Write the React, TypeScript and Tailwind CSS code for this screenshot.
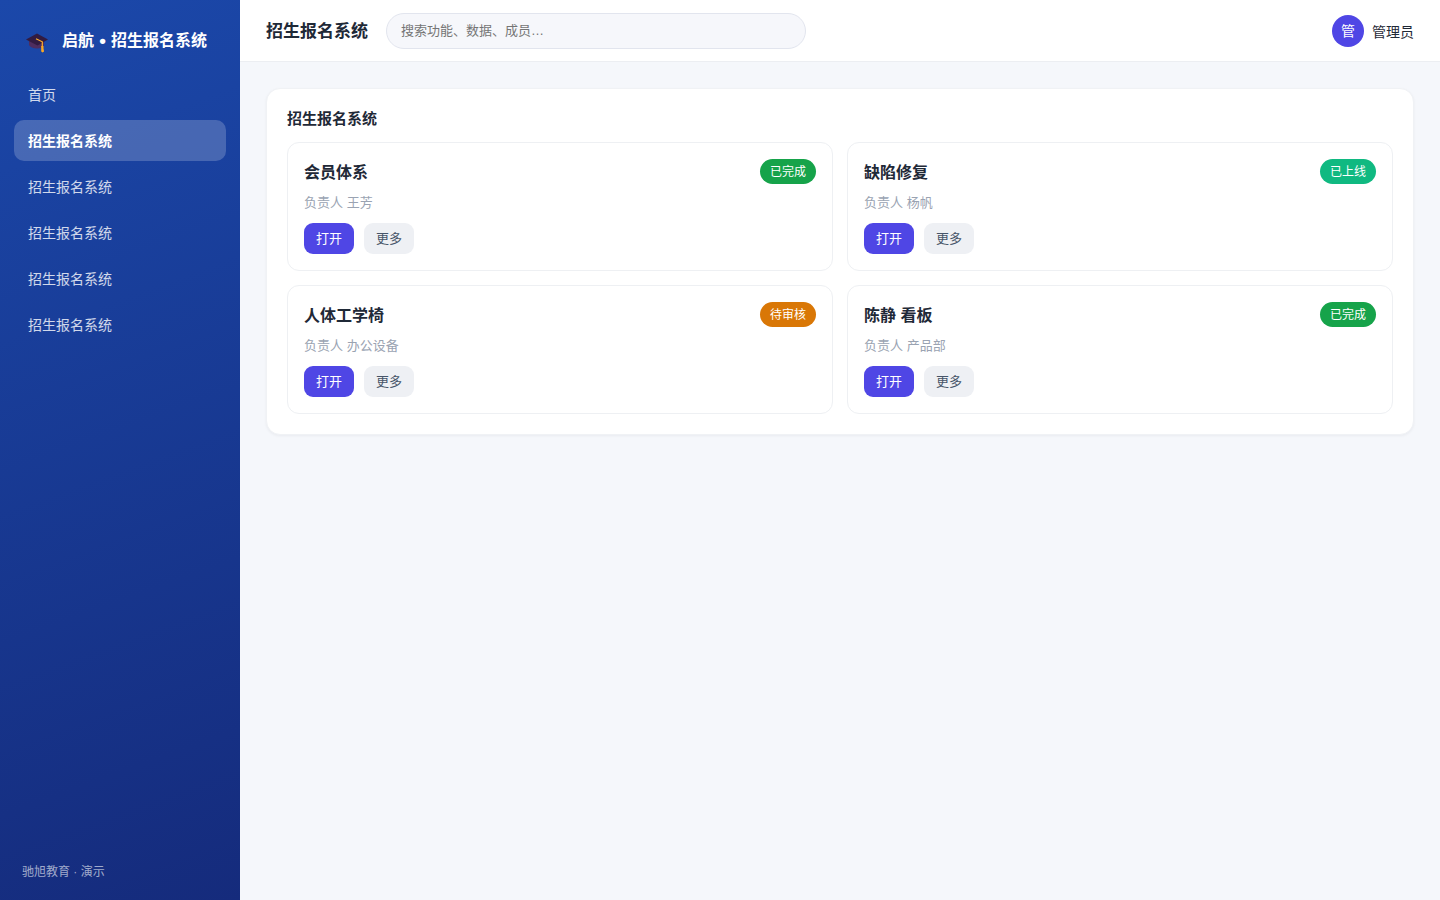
import React from 'react';

type Status = 'done' | 'online' | 'pending';

interface CardItem {
  title: string;
  owner: string;
  status: Status;
}

const navItems = ['首页', '招生报名系统', '招生报名系统', '招生报名系统', '招生报名系统', '招生报名系统'];
const activeIndex = 1;

const cards: CardItem[] = [
  { title: '会员体系', owner: '王芳', status: 'done' },
  { title: '缺陷修复', owner: '杨帆', status: 'online' },
  { title: '人体工学椅', owner: '办公设备', status: 'pending' },
  { title: '陈静 看板', owner: '产品部', status: 'done' },
];

const statusMap: Record<Status, { label: string; className: string }> = {
  done: { label: '已完成', className: 'bg-[#16a34a]' },
  online: { label: '已上线', className: 'bg-[#10b981]' },
  pending: { label: '待审核', className: 'bg-[#d97706]' },
};

const CapIcon: React.FC = () => (
  <svg width="24" height="22" viewBox="0 0 24 22" className="mt-1.5 shrink-0">
    <path d="M4 9v4c1 2 4 3.500 8 3.500S18.500 15 19 13V9z" fill="#4e2d5e" />
    <path d="M12 1.500 23 7.500 12.500 13.500 1 7.500z" fill="#321b41" />
    <path d="M11 6.800 17.300 9.800V15" fill="none" stroke="#ffb02e" strokeWidth="1.200" />
    <path d="M16.200 14h2.300v2.500l.6 3-1.600 1-1.300-1z" fill="#f9a825" />
  </svg>
);

const Sidebar: React.FC = () => (
  <aside className="flex w-60 shrink-0 flex-col bg-[linear-gradient(160deg,#1b48aa_0%,#152b7c_100%)] px-3.5 text-white">
    <div className="flex h-[76px] items-center gap-3 pt-1 pl-[11px]">
      <CapIcon />
      <span className="flex items-center pt-0.5 pl-px text-base leading-6 font-bold whitespace-nowrap">
        启航<span className="w-[17px] text-center text-[19px]">•</span>招生报名系统
      </span>
    </div>

    <nav className="-mt-0.5 flex flex-col gap-[5px]">
      {navItems.map((item, index) => (
        <a
          key={index}
          className={
            index === activeIndex
              ? 'flex h-[41px] items-center rounded-[10px] bg-white/20 px-3.5 text-sm font-bold'
              : 'flex h-[41px] items-center rounded-[10px] px-3.5 text-sm text-white/80'
          }
        >
          {item}
        </a>
      ))}
    </nav>

    <div className="mt-auto pb-[19px] pl-2 text-xs leading-[18px] text-white/60">驰旭教育 · 演示</div>
  </aside>
);

const Header: React.FC = () => (
  <header className="flex h-[62px] shrink-0 items-center border-b border-[#eceef2] bg-white pr-[26px] pl-[26px]">
    <h1 className="w-[120px] pt-0.5 text-[17px] font-bold whitespace-nowrap">招生报名系统</h1>
    <input
      type="text"
      placeholder="搜索功能、数据、成员…"
      className="h-9 w-[420px] rounded-full border border-[#e2e5ee] bg-[#f6f7fb] px-3.5 text-[13px] outline-none placeholder:text-[#757575]"
    />
    <div className="ml-auto flex items-center gap-2">
      <div className="flex size-8 items-center justify-center rounded-full bg-[#4f46e5] text-sm text-white">管</div>
      <span className="pt-0.5 text-sm">管理员</span>
    </div>
  </header>
);

const Card: React.FC<{ item: CardItem }> = ({ item }) => {
  const status = statusMap[item.status];

  return (
    <div className="h-[129px] rounded-xl border border-[#eef0f3] bg-white p-4">
      <div className="flex h-[25px] items-center justify-between">
        <h3 className="pt-0.5 text-base leading-[23px] font-bold">{item.title}</h3>
        <span className={`flex h-[25px] items-center rounded-full px-2.5 text-xs text-white ${status.className}`}>
          {status.label}
        </span>
      </div>
      <p className="mt-[9px] text-[13px] leading-5 text-[#9aa3b2]">负责人 {item.owner}</p>
      <div className="mt-2.5 flex gap-2.5">
        <button className="h-[31px] w-[50px] rounded-[9px] bg-[#4f46e5] text-[13px] text-white">打开</button>
        <button className="h-[31px] w-[50px] rounded-[9px] bg-[#eef0f4] text-[13px] text-[#475569]">更多</button>
      </div>
    </div>
  );
};

export default function App() {
  return (
    <div className="flex h-screen bg-[#f5f7fb] font-['Liberation_Sans','Noto_Sans_CJK_SC',sans-serif] text-[#1f2937]">
      <Sidebar />
      <div className="flex flex-1 flex-col">
        <Header />
        <main className="flex-1 p-[26px]">
          <section className="rounded-[14px] border border-[#f0f2f5] bg-white p-5 shadow-[0_1px_3px_rgba(16,24,40,0.05)]">
            <h2 className="mb-3.5 h-[19px] text-[15px] leading-[19px] font-bold">招生报名系统</h2>
            <div className="grid grid-cols-2 gap-3.5">
              {cards.map((item) => (
                <Card key={item.title} item={item} />
              ))}
            </div>
          </section>
        </main>
      </div>
    </div>
  );
}
